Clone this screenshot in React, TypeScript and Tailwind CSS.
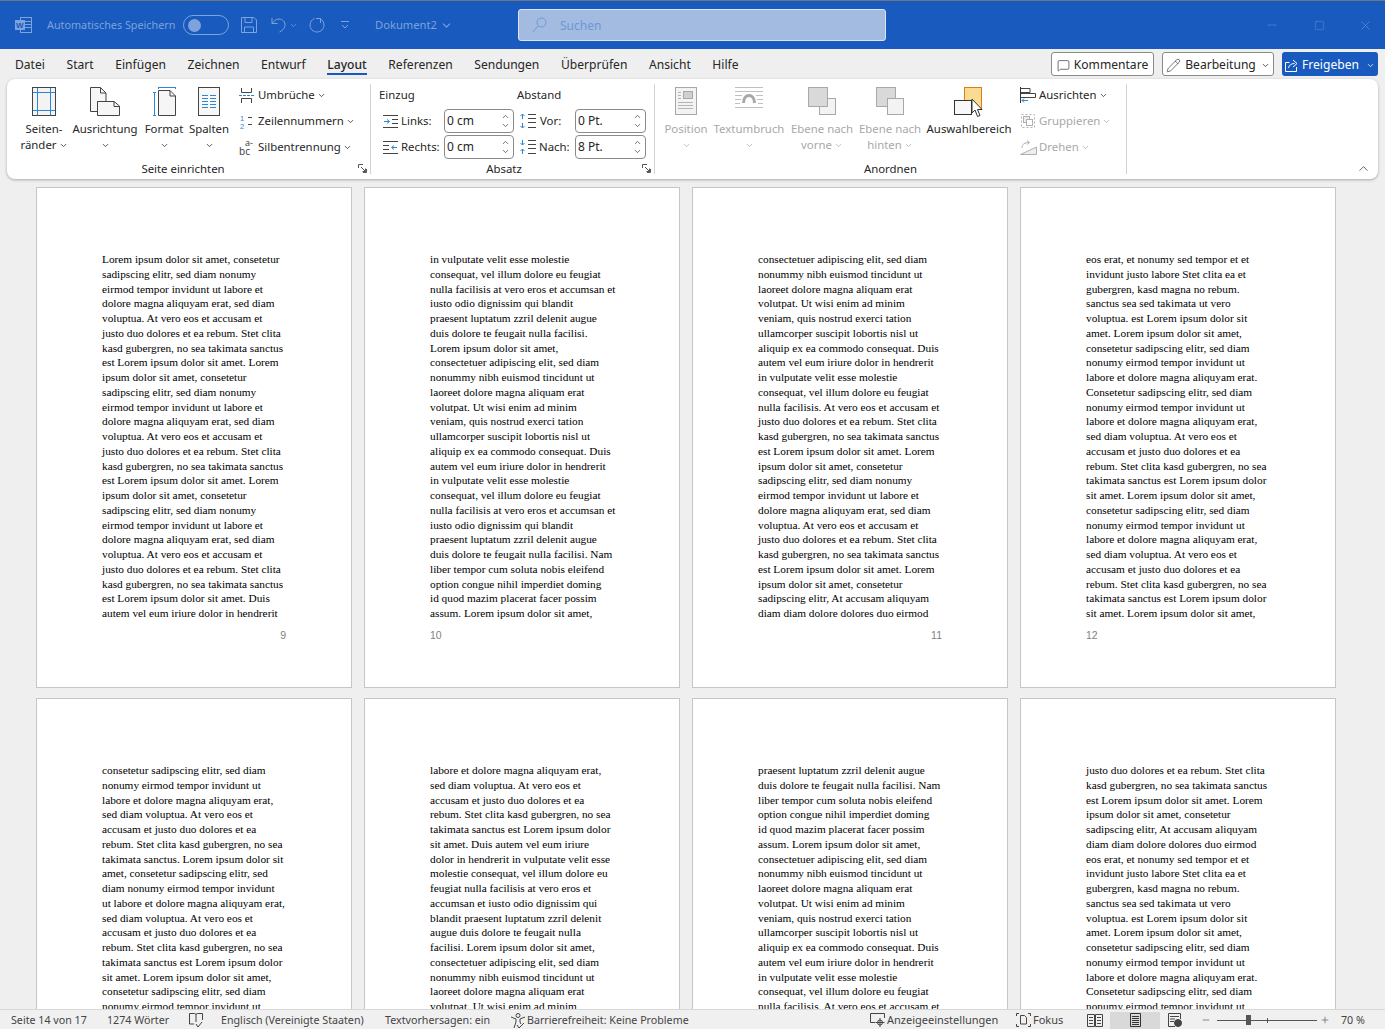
import React from 'react';
import { ChevronDown, ChevronUp, MessageSquare, Minus, Pencil, Plus, Square, X } from 'lucide-react';

const pages = [
  { n: 9, lines: ['Lorem ipsum dolor sit amet, consetetur', 'sadipscing elitr, sed diam nonumy', 'eirmod tempor invidunt ut labore et', 'dolore magna aliquyam erat, sed diam', 'voluptua. At vero eos et accusam et', 'justo duo dolores et ea rebum. Stet clita', 'kasd gubergren, no sea takimata sanctus', 'est Lorem ipsum dolor sit amet. Lorem', 'ipsum dolor sit amet, consetetur', 'sadipscing elitr, sed diam nonumy', 'eirmod tempor invidunt ut labore et', 'dolore magna aliquyam erat, sed diam', 'voluptua. At vero eos et accusam et', 'justo duo dolores et ea rebum. Stet clita', 'kasd gubergren, no sea takimata sanctus', 'est Lorem ipsum dolor sit amet. Lorem', 'ipsum dolor sit amet, consetetur', 'sadipscing elitr, sed diam nonumy', 'eirmod tempor invidunt ut labore et', 'dolore magna aliquyam erat, sed diam', 'voluptua. At vero eos et accusam et', 'justo duo dolores et ea rebum. Stet clita', 'kasd gubergren, no sea takimata sanctus', 'est Lorem ipsum dolor sit amet. Duis', 'autem vel eum iriure dolor in hendrerit'] },
  { n: 10, lines: ['in vulputate velit esse molestie', 'consequat, vel illum dolore eu feugiat', 'nulla facilisis at vero eros et accumsan et', 'iusto odio dignissim qui blandit', 'praesent luptatum zzril delenit augue', 'duis dolore te feugait nulla facilisi.', 'Lorem ipsum dolor sit amet,', 'consectetuer adipiscing elit, sed diam', 'nonummy nibh euismod tincidunt ut', 'laoreet dolore magna aliquam erat', 'volutpat. Ut wisi enim ad minim', 'veniam, quis nostrud exerci tation', 'ullamcorper suscipit lobortis nisl ut', 'aliquip ex ea commodo consequat. Duis', 'autem vel eum iriure dolor in hendrerit', 'in vulputate velit esse molestie', 'consequat, vel illum dolore eu feugiat', 'nulla facilisis at vero eros et accumsan et', 'iusto odio dignissim qui blandit', 'praesent luptatum zzril delenit augue', 'duis dolore te feugait nulla facilisi. Nam', 'liber tempor cum soluta nobis eleifend', 'option congue nihil imperdiet doming', 'id quod mazim placerat facer possim', 'assum. Lorem ipsum dolor sit amet,'] },
  { n: 11, lines: ['consectetuer adipiscing elit, sed diam', 'nonummy nibh euismod tincidunt ut', 'laoreet dolore magna aliquam erat', 'volutpat. Ut wisi enim ad minim', 'veniam, quis nostrud exerci tation', 'ullamcorper suscipit lobortis nisl ut', 'aliquip ex ea commodo consequat. Duis', 'autem vel eum iriure dolor in hendrerit', 'in vulputate velit esse molestie', 'consequat, vel illum dolore eu feugiat', 'nulla facilisis. At vero eos et accusam et', 'justo duo dolores et ea rebum. Stet clita', 'kasd gubergren, no sea takimata sanctus', 'est Lorem ipsum dolor sit amet. Lorem', 'ipsum dolor sit amet, consetetur', 'sadipscing elitr, sed diam nonumy', 'eirmod tempor invidunt ut labore et', 'dolore magna aliquyam erat, sed diam', 'voluptua. At vero eos et accusam et', 'justo duo dolores et ea rebum. Stet clita', 'kasd gubergren, no sea takimata sanctus', 'est Lorem ipsum dolor sit amet. Lorem', 'ipsum dolor sit amet, consetetur', 'sadipscing elitr, At accusam aliquyam', 'diam diam dolore dolores duo eirmod'] },
  { n: 12, lines: ['eos erat, et nonumy sed tempor et et', 'invidunt justo labore Stet clita ea et', 'gubergren, kasd magna no rebum.', 'sanctus sea sed takimata ut vero', 'voluptua. est Lorem ipsum dolor sit', 'amet. Lorem ipsum dolor sit amet,', 'consetetur sadipscing elitr, sed diam', 'nonumy eirmod tempor invidunt ut', 'labore et dolore magna aliquyam erat.', 'Consetetur sadipscing elitr, sed diam', 'nonumy eirmod tempor invidunt ut', 'labore et dolore magna aliquyam erat,', 'sed diam voluptua. At vero eos et', 'accusam et justo duo dolores et ea', 'rebum. Stet clita kasd gubergren, no sea', 'takimata sanctus est Lorem ipsum dolor', 'sit amet. Lorem ipsum dolor sit amet,', 'consetetur sadipscing elitr, sed diam', 'nonumy eirmod tempor invidunt ut', 'labore et dolore magna aliquyam erat,', 'sed diam voluptua. At vero eos et', 'accusam et justo duo dolores et ea', 'rebum. Stet clita kasd gubergren, no sea', 'takimata sanctus est Lorem ipsum dolor', 'sit amet. Lorem ipsum dolor sit amet,'] },
  { n: 13, lines: ['consetetur sadipscing elitr, sed diam', 'nonumy eirmod tempor invidunt ut', 'labore et dolore magna aliquyam erat,', 'sed diam voluptua. At vero eos et', 'accusam et justo duo dolores et ea', 'rebum. Stet clita kasd gubergren, no sea', 'takimata sanctus. Lorem ipsum dolor sit', 'amet, consetetur sadipscing elitr, sed', 'diam nonumy eirmod tempor invidunt', 'ut labore et dolore magna aliquyam erat,', 'sed diam voluptua. At vero eos et', 'accusam et justo duo dolores et ea', 'rebum. Stet clita kasd gubergren, no sea', 'takimata sanctus est Lorem ipsum dolor', 'sit amet. Lorem ipsum dolor sit amet,', 'consetetur sadipscing elitr, sed diam', 'nonumy eirmod tempor invidunt ut'] },
  { n: 14, lines: ['labore et dolore magna aliquyam erat,', 'sed diam voluptua. At vero eos et', 'accusam et justo duo dolores et ea', 'rebum. Stet clita kasd gubergren, no sea', 'takimata sanctus est Lorem ipsum dolor', 'sit amet. Duis autem vel eum iriure', 'dolor in hendrerit in vulputate velit esse', 'molestie consequat, vel illum dolore eu', 'feugiat nulla facilisis at vero eros et', 'accumsan et iusto odio dignissim qui', 'blandit praesent luptatum zzril delenit', 'augue duis dolore te feugait nulla', 'facilisi. Lorem ipsum dolor sit amet,', 'consectetuer adipiscing elit, sed diam', 'nonummy nibh euismod tincidunt ut', 'laoreet dolore magna aliquam erat', 'volutpat. Ut wisi enim ad minim'] },
  { n: 15, lines: ['praesent luptatum zzril delenit augue', 'duis dolore te feugait nulla facilisi. Nam', 'liber tempor cum soluta nobis eleifend', 'option congue nihil imperdiet doming', 'id quod mazim placerat facer possim', 'assum. Lorem ipsum dolor sit amet,', 'consectetuer adipiscing elit, sed diam', 'nonummy nibh euismod tincidunt ut', 'laoreet dolore magna aliquam erat', 'volutpat. Ut wisi enim ad minim', 'veniam, quis nostrud exerci tation', 'ullamcorper suscipit lobortis nisl ut', 'aliquip ex ea commodo consequat. Duis', 'autem vel eum iriure dolor in hendrerit', 'in vulputate velit esse molestie', 'consequat, vel illum dolore eu feugiat', 'nulla facilisis. At vero eos et accusam et'] },
  { n: 16, lines: ['justo duo dolores et ea rebum. Stet clita', 'kasd gubergren, no sea takimata sanctus', 'est Lorem ipsum dolor sit amet. Lorem', 'ipsum dolor sit amet, consetetur', 'sadipscing elitr, At accusam aliquyam', 'diam diam dolore dolores duo eirmod', 'eos erat, et nonumy sed tempor et et', 'invidunt justo labore Stet clita ea et', 'gubergren, kasd magna no rebum.', 'sanctus sea sed takimata ut vero', 'voluptua. est Lorem ipsum dolor sit', 'amet. Lorem ipsum dolor sit amet,', 'consetetur sadipscing elitr, sed diam', 'nonumy eirmod tempor invidunt ut', 'labore et dolore magna aliquyam erat.', 'Consetetur sadipscing elitr, sed diam', 'nonumy eirmod tempor invidunt ut'] },
];

const Chev = ({ className = '' }: { className?: string }) => (
  <ChevronDown size={9} strokeWidth={2} className={`inline-block shrink-0 ${className}`} />
);

const BigButton = ({ w, icon, lines, disabled }: { w: string; icon: React.ReactNode; lines: string[]; disabled?: boolean }) => (
  <div className={`flex flex-col items-center ${w} ${disabled ? 'text-[#a8a8a8]' : 'text-[#262626]'}`}>
    <div className="h-[38px] pt-[4px] flex justify-center">{icon}</div>
    <div className="leading-[16px] whitespace-nowrap">{lines[0]}</div>
    <div className="leading-[16px] h-[16px] whitespace-nowrap flex items-center gap-[2px]">
      {lines[1]}
      <Chev />
    </div>
  </div>
);

const SmallButton = ({ icon, label, disabled }: { icon: React.ReactNode; label: string; disabled?: boolean }) => (
  <div className={`h-[26px] flex items-center whitespace-nowrap ${disabled ? 'text-[#a8a8a8]' : 'text-[#262626]'}`}>
    <div className="w-[19px] shrink-0 flex">{icon}</div>
    <span>{label}</span>
    <Chev className="ml-[2px]" />
  </div>
);

const Launcher = () => (
  <svg width="9" height="9" viewBox="0 0 9 9" fill="none" stroke="#555" className="shrink-0">
    <path d="M8.5 5V8.5H5M.5 4V.5H5M3 3L7.5 7.5M4.5 7.5H7.5V4.5" />
  </svg>
);

const GroupLabel = ({ label, launcher, className = '' }: { label: string; launcher?: boolean; className?: string }) => (
  <div className={`h-[16px] flex items-center justify-center relative text-[#262626] leading-[16px] ${className}`}>
    {label}
    {launcher && (
      <div className="absolute right-[3px] top-[3px]">
        <Launcher />
      </div>
    )}
  </div>
);

const Sep = () => <div className="w-px h-[90px] mt-[1px] bg-[#d2d2d2] shrink-0" />;

const Spin = ({ value, w }: { value: string; w: string }) => (
  <div className={`h-[24px] ${w} border border-[#8a8a8a] rounded-[4px] bg-white flex items-center justify-between pl-[2px] pr-[3px] text-[#262626] text-[12px]`}>
    <span>{value}</span>
    <div className="flex flex-col text-[#444]">
      <ChevronUp size={9} strokeWidth={2} />
      <ChevronDown size={9} strokeWidth={2} />
    </div>
  </div>
);

const Lines = ({ ys, x1, x2, color = '#444' }: { ys: number[]; x1: number; x2: number; color?: string }) => (
  <>
    {ys.map(y => (
      <path key={y} d={`M${x1} ${y}.5H${x2}`} stroke={color} />
    ))}
  </>
);

const IconMargins = () => (
  <svg width="24" height="29" viewBox="0 0 24 29" fill="none">
    <rect x=".5" y=".5" width="23" height="28" fill="#f3f3f3" stroke="#444" />
    <path d="M5.5 1V28M18.5 1V28M1 5.5H23M1 23.5H23" stroke="#2b87d3" />
  </svg>
);
const IconOrientation = () => (
  <svg width="30" height="29" viewBox="0 0 30 29" fill="none" stroke="#444">
    <path d="M.5 24.5V.5H10.5L16 6V14.500H7.500V24.500Z" fill="#f6f6f6" />
    <path d="M10.5 .5V6H16" />
    <path d="M7.5 28.5V14.5H24L29.5 19V28.5Z" fill="#f6f6f6" />
    <path d="M24 14.5V19.5H29.5" />
  </svg>
);
const IconFormat = () => (
  <svg width="23" height="29" viewBox="0 0 23 29" fill="none">
    <path d="M5.5 3.5V28.5H22.5V9L17 3.5Z" fill="#f6f6f6" stroke="#444" />
    <path d="M17 3.5V9H22.5" stroke="#444" />
    <path d="M5.5 .5H22.5M5.5 0V2M22.5 0V2M1.5 6V28M0 5.5H3M0 28.5H3" stroke="#2b87d3" />
  </svg>
);
const IconColumns = () => (
  <svg width="22" height="29" viewBox="0 0 22 29" fill="none">
    <rect x=".5" y=".5" width="21" height="28" fill="#f8f8f8" stroke="#444" />
    <Lines ys={[8, 11, 14, 17, 20]} x1={4} x2={10} color="#2b87d3" />
    <Lines ys={[8, 11, 14, 17, 20]} x1={12} x2={18} color="#2b87d3" />
  </svg>
);
const IconBreaks = () => (
  <svg width="15" height="15" viewBox="0 0 15 15" fill="none">
    <path d="M2.5 0V4.5H12.5V0M2.5 15V10.5H12.5V15" stroke="#444" />
    <path d="M0 7.5H15" stroke="#2b87d3" strokeDasharray="3 1" />
  </svg>
);
const IconLineNo = () => (
  <svg width="15" height="15" viewBox="0 0 15 15" fill="none">
    <text x="1" y="6.5" fontSize="7.5" fill="#2b87d3" fontFamily="Liberation Sans">1</text>
    <text x="1" y="14.5" fontSize="7.5" fill="#2b87d3" fontFamily="Liberation Sans">2</text>
    <path d="M9 3.5H13M9 10.5H13" stroke="#444" />
  </svg>
);
const IconHyphen = () => (
  <svg width="16" height="16" viewBox="0 0 16 16" fill="none">
    <text x="6" y="6.5" fontSize="9" fill="#444" fontFamily="Noto Sans">a-</text>
    <text x="0" y="15.5" fontSize="10" fill="#444" fontFamily="Noto Sans">bc</text>
  </svg>
);
const IconIndentL = () => (
  <svg width="15" height="13" viewBox="0 0 15 13" fill="none">
    <path d="M0 .5H15M9 4.5H15M9 8.5H15M0 12.5H15" stroke="#444" />
    <path d="M1 6.5H6M4 4.5L6.5 6.5L4 8.5" stroke="#2b87d3" />
  </svg>
);
const IconIndentR = () => (
  <svg width="15" height="13" viewBox="0 0 15 13" fill="none">
    <path d="M0 .5H15M0 4.5H6M0 8.5H6M0 12.5H15" stroke="#444" />
    <path d="M14 6.5H9M11 4.5L8.5 6.5L11 8.5" stroke="#2b87d3" />
  </svg>
);
const IconSpaceBefore = () => (
  <svg width="18" height="16" viewBox="0 0 18 16" fill="none">
    <path d="M3.5 1V6M1.5 3L3.5 1L5.5 3M3.5 10V15M1.5 13L3.5 15L5.5 13" stroke="#2b87d3" />
    <path d="M9 1.5H17M9 5.5H17M9 9.5H17M9 14.5H17" stroke="#444" />
  </svg>
);
const IconSpaceAfter = () => (
  <svg width="18" height="16" viewBox="0 0 18 16" fill="none">
    <path d="M3.5 1V6M1.5 4L3.5 6L5.5 4M3.5 10V15M1.5 12L3.5 10L5.5 12" stroke="#2b87d3" />
    <path d="M9 1.5H17M9 5.5H17M9 9.5H17M9 14.5H17" stroke="#444" />
  </svg>
);
const IconPosition = () => (
  <svg width="22" height="28" viewBox="0 0 22 28" fill="none">
    <rect x=".5" y=".5" width="21" height="27" fill="#f3f3f3" stroke="#a8a8a8" />
    <rect x="8.5" y="4.5" width="9" height="7" fill="#d0d0d0" stroke="#a8a8a8" />
    <path d="M3 5.5H6M3 8.5H6M3 11.5H6M3 15.5H18M3 18.5H18M3 21.5H18" stroke="#b5b5b5" />
  </svg>
);
const IconWrap = () => (
  <svg width="28" height="24" viewBox="0 0 28 24" fill="none">
    <path d="M0 .5H28M0 4.5H28M0 8.5H7M21 8.5H28M0 12.5H6M22 12.5H28M0 16.5H5M23 16.5H28M0 20.5H28" stroke="#c0c0c0" />
    <path d="M8.5 16C8.5 11 11 8.5 14 8.5S19.5 11 19.5 16" stroke="#a8a8a8" strokeWidth="3" />
  </svg>
);
const IconForward = () => (
  <svg width="28" height="28" viewBox="0 0 28 28" fill="none">
    <rect x="11.5" y="11.5" width="16" height="16" fill="#f3f3f3" stroke="#a8a8a8" />
    <rect x=".5" y=".5" width="19" height="19" fill="#d9d9d9" stroke="#a8a8a8" />
  </svg>
);
const IconBackward = () => (
  <svg width="28" height="28" viewBox="0 0 28 28" fill="none">
    <rect x=".5" y=".5" width="19" height="19" fill="#d9d9d9" stroke="#a8a8a8" />
    <rect x="11.5" y="11.5" width="16" height="16" fill="#f3f3f3" stroke="#a8a8a8" />
  </svg>
);
const IconSelection = () => (
  <svg width="30" height="31" viewBox="0 0 30 31" fill="none">
    <rect x="10.5" y=".5" width="17" height="22" fill="#fadb92" stroke="#e07b1a" />
    <rect x=".5" y="13.5" width="17" height="14" fill="#f8f8f8" stroke="#333" />
    <path d="M18 12V26L21 23L23.5 29.5L26 28.5L23.5 22.5H28Z" fill="#fff" stroke="#333" />
  </svg>
);
const IconAlign = () => (
  <svg width="16" height="16" viewBox="0 0 16 16" fill="none">
    <path d="M.5 0V16" stroke="#333" />
    <path d="M1 1.5H10V5.5H1M1 6.5H15.5V10.5H1" fill="#fff" stroke="#444" />
    <path d="M2 13.5H8M4 11.5L2 13.5L4 15.5" stroke="#2b87d3" />
  </svg>
);
const IconGroup = () => (
  <svg width="16" height="16" viewBox="0 0 16 16" fill="none" stroke="#b0b0b0">
    <rect x="1.5" y="1.5" width="13" height="13" strokeDasharray="2 2" />
    <rect x="3.5" y="3.5" width="6" height="6" fill="#eee" />
    <rect x="6.5" y="6.5" width="6" height="6" fill="#fff" />
  </svg>
);
const IconRotate = () => (
  <svg width="17" height="15" viewBox="0 0 17 15" fill="none" stroke="#b0b0b0">
    <path d="M.5 14.5L16.5 7V14.5Z" fill="#eee" />
    <path d="M2 8C2 4 5 2.5 9 2.5M7 .5L9.5 2.5L7 4.5" />
  </svg>
);

const Page = ({ n, lines }: { n: number; lines: string[] }) => (
  <div className="h-[501px] bg-white border border-[#c6c6c6] pt-[64px] pl-[65px] pr-[65px] font-['Liberation_Serif',serif] text-[11.3px] leading-[14.75px] text-black overflow-hidden">
    {lines.map((l, i) => (
      <div key={i} className="whitespace-nowrap">
        {l}
      </div>
    ))}
    <div className={`mt-[7px] font-['Liberation_Sans',sans-serif] text-[10.5px] text-[#7f7f7f] ${n % 2 ? 'text-right' : 'text-left'}`}>{n}</div>
  </div>
);

export default function App() {
  const tabs = ['Datei', 'Start', 'Einfügen', 'Zeichnen', 'Entwurf', 'Layout', 'Referenzen', 'Sendungen', 'Überprüfen', 'Ansicht', 'Hilfe'];
  const dim = 'text-[#7ea2dc]';

  return (
    <div className="h-screen w-full overflow-hidden flex flex-col bg-[#efefef] font-['Noto_Sans',sans-serif] text-[11.4px]">
      {/* title bar */}
      <div className={`h-[49px] shrink-0 bg-[#185abd] border-t border-[#6f7680] flex items-center ${dim}`}>
        <div className="ml-[15px] w-[32px] shrink-0">
          <svg width="17" height="16" viewBox="0 0 17 16" fill="none">
            <rect x="5.5" y=".5" width="11" height="15" stroke="#7ea2dc" />
            <path d="M10 4.5H16M10 7.5H16M10 10.5H16" stroke="#7ea2dc" />
            <rect x="0" y="3" width="10" height="10" fill="#7ea2dc" />
            <text x="1" y="11" fontSize="8" fontWeight="700" fill="#185abd" fontFamily="Liberation Sans">W</text>
          </svg>
        </div>
        <span className="text-[10.8px] w-[136px] whitespace-nowrap">Automatisches Speichern</span>
        <div className="w-[46px] h-[20px] rounded-full border border-[#7ea2dc] flex items-center pl-[4px]">
          <div className="w-[13px] h-[13px] rounded-full bg-[#7ea2dc]" />
        </div>
        <svg className="ml-[12px]" width="16" height="16" viewBox="0 0 16 16" fill="none" stroke="#7ea2dc">
          <path d="M.5.5H13L15.5 3V15.5H.5Z" />
          <path d="M4 .5V5.5H11V.5M3.5 15.5V10H12.5V15.5" />
        </svg>
        <svg className="ml-[14px]" width="15" height="16" viewBox="0 0 15 16" fill="none" stroke="#7ea2dc">
          <path d="M1 1V6.5H6.5M1 6.5C3 3.5 5.5 2 8 2C11.5 2 14.5 5 14 8.5C13.6 11.5 11.5 13.5 8.5 15" />
        </svg>
        <Chev className="ml-[3px]" />
        <svg className="ml-[11px]" width="16" height="16" viewBox="0 0 16 16" fill="none" stroke="#7ea2dc">
          <path d="M11 1.5C13.5 3 15 5.3 15 8C15 11.9 11.9 15 8 15C4.1 15 1 11.9 1 8C1 5 3 2.500 5.5 1.5M7 1.5H11.5V6" />
        </svg>
        <svg className="ml-[16px]" width="8" height="8" viewBox="0 0 8 8" fill="none" stroke="#7ea2dc">
          <path d="M0 .5H8M1 4L4 7L7 4" />
        </svg>
        <span className="ml-[26px] text-[11.2px] pt-[1px] whitespace-nowrap">Dokument2</span>
        <ChevronDown size={13} className="ml-[3px]" />
        <div className="ml-[65px] w-[368px] h-[32px] rounded-[3px] bg-[#a3bbe0] border border-[#dbe4f3] flex items-center pl-[13px] text-[#6f96d6]">
          <svg width="15" height="16" viewBox="0 0 15 16" fill="none" stroke="#6f96d6">
            <circle cx="9.5" cy="5.5" r="4.5" />
            <path d="M6 9L1 15" />
          </svg>
          <span className="ml-[13px] pt-[1px] text-[12px]">Suchen</span>
        </div>
        <div className="ml-auto flex items-center text-[#6f96d6]">
          <Minus size={14} strokeWidth={1} />
          <Square size={11} strokeWidth={1} className="ml-[35px]" />
          <X size={15} strokeWidth={1} className="ml-[33px] mr-[12px]" />
        </div>
      </div>

      {/* tabs */}
      <div className="h-[30px] shrink-0 flex items-center pl-[15px] text-[#262626] text-[12.1px]">
        <div className="flex gap-[21.6px]">
          {tabs.map(t => (
            <div key={t} className={`relative h-[30px] pt-[2px] flex items-center whitespace-nowrap ${t === 'Layout' ? 'font-medium' : ''}`}>
              {t}
              {t === 'Layout' && <div className="absolute left-0 right-0 bottom-[4px] h-[2px] bg-[#185abd]" />}
            </div>
          ))}
        </div>
        <div className="ml-auto mr-[7px] flex items-center gap-[8px] whitespace-nowrap">
          <div className="h-[24px] w-[103px] pt-[2px] border border-[#8a8a8a] rounded-[3px] bg-white flex items-center justify-center gap-[4px]">
            <MessageSquare size={13} strokeWidth={1.2} />
            Kommentare
          </div>
          <div className="h-[24px] w-[112px] pt-[2px] border border-[#8a8a8a] rounded-[3px] bg-white flex items-center justify-center gap-[4px]">
            <Pencil size={15} strokeWidth={1} />
            Bearbeitung
            <Chev className="ml-[1px]" />
          </div>
          <div className="h-[24px] w-[96px] pt-[2px] rounded-[3px] bg-[#185abd] text-white flex items-center justify-center gap-[4px]">
            <svg width="13" height="13" viewBox="0 0 13 13" fill="none" stroke="#fff">
              <path d="M4.5 3.5H.5V12.5H11.5V8" />
              <path d="M3.5 9C4 6 6.5 4.5 9.5 4.5M8 1L12 4.5L8 8" />
            </svg>
            Freigeben
            <Chev className="ml-[3px]" />
          </div>
        </div>
      </div>

      {/* ribbon */}
      <div className="mx-[7px] h-[100px] shrink-0 bg-white rounded-[8px] shadow-[0_1px_3px_rgba(0,0,0,0.3)] flex pt-[4px] relative z-10">
        {/* Seite einrichten */}
        <div className="w-[363px] shrink-0 flex flex-col">
          <div className="h-[78px] flex pl-[10px]">
            <BigButton w="w-[54px]" icon={<IconMargins />} lines={['Seiten-', 'ränder']} />
            <BigButton w="w-[68px]" icon={<IconOrientation />} lines={['Ausrichtung', '']} />
            <BigButton w="w-[50px]" icon={<IconFormat />} lines={['Format', '']} />
            <BigButton w="w-[40px]" icon={<IconColumns />} lines={['Spalten', '']} />
            <div className="ml-[10px] -mt-[1px]">
              <SmallButton icon={<IconBreaks />} label="Umbrüche" />
              <SmallButton icon={<IconLineNo />} label="Zeilennummern" />
              <SmallButton icon={<IconHyphen />} label="Silbentrennung" />
            </div>
          </div>
          <GroupLabel label="Seite einrichten" launcher className="pr-[11px]" />
        </div>
        <Sep />

        {/* Absatz */}
        <div className="w-[283px] shrink-0 flex flex-col">
          <div className="h-[78px] flex pl-[8px]">
            <div className="w-[138px] -mt-[1px] text-[#262626]">
              <div className="h-[26px] flex items-center">Einzug</div>
              <div className="h-[26px] flex items-center pl-[4px]">
                <IconIndentL />
                <span className="ml-[3px] w-[43px]">Links:</span>
                <Spin value="0 cm" w="w-[70px]" />
              </div>
              <div className="h-[26px] flex items-center pl-[4px]">
                <IconIndentR />
                <span className="ml-[3px] w-[43px]">Rechts:</span>
                <Spin value="0 cm" w="w-[70px]" />
              </div>
            </div>
            <div className="w-[130px] -mt-[1px] text-[#262626]">
              <div className="h-[26px] flex items-center">Abstand</div>
              <div className="h-[26px] flex items-center pl-[2px]">
                <IconSpaceBefore />
                <span className="ml-[3px] w-[35px]">Vor:</span>
                <Spin value="0 Pt." w="w-[71px]" />
              </div>
              <div className="h-[26px] flex items-center pl-[2px]">
                <IconSpaceAfter />
                <span className="ml-[2px] w-[36px]">Nach:</span>
                <Spin value="8 Pt." w="w-[71px]" />
              </div>
            </div>
          </div>
          <GroupLabel label="Absatz" launcher className="pr-[17px]" />
        </div>
        <Sep />

        {/* Anordnen */}
        <div className="w-[471px] shrink-0 flex flex-col">
          <div className="h-[78px] flex pl-[6px]">
            <BigButton w="w-[50px]" icon={<IconPosition />} lines={['Position', '']} disabled />
            <BigButton w="w-[76px]" icon={<IconWrap />} lines={['Textumbruch', '']} disabled />
            <BigButton w="w-[70px]" icon={<IconForward />} lines={['Ebene nach', 'vorne']} disabled />
            <BigButton w="w-[66px]" icon={<IconBackward />} lines={['Ebene nach', 'hinten']} disabled />
            <div className="w-[92px] flex flex-col items-center text-[#262626]">
              <div className="h-[38px] pt-[4px]">
                <IconSelection />
              </div>
              <div className="leading-[16px] whitespace-nowrap">Auswahlbereich</div>
            </div>
            <div className="ml-[5px] -mt-[1px]">
              <SmallButton icon={<IconAlign />} label="Ausrichten" />
              <SmallButton icon={<IconGroup />} label="Gruppieren" disabled />
              <SmallButton icon={<IconRotate />} label="Drehen" disabled />
            </div>
          </div>
          <GroupLabel label="Anordnen" />
        </div>
        <Sep />

        <div className="flex-1 flex items-end justify-end pb-[3px] pr-[7px]">
          <ChevronUp size={15} strokeWidth={1.3} className="text-[#444]" />
        </div>
      </div>

      {/* pages */}
      <div className="flex-1 min-h-0 overflow-hidden pt-[8px] pl-[36px]">
        <div className="grid grid-cols-[repeat(4,316px)] gap-x-[12px] gap-y-[10px]">
          {pages.map(p => (
            <Page key={p.n} n={p.n} lines={p.lines} />
          ))}
        </div>
      </div>

      {/* status bar */}
      <div className="h-[20px] shrink-0 pt-[2px] bg-[#f0f0f0] border-t border-[#d8d8d8] flex items-center text-[10.7px] text-[#444] whitespace-nowrap">
        <span className="ml-[11px] w-[96px]">Seite 14 von 17</span>
        <span className="w-[82px]">1274 Wörter</span>
        <svg width="14" height="15" viewBox="0 0 14 15" fill="none" stroke="#444">
          <path d="M.5 .5H5.5C6.5 .5 7 1 7 2V9M13.5 .5H8.5C7.500 .5 7 1 7 2M.5 .5V11H5M13.5 .5V7M7 11L9 14L13 9" />
        </svg>
        <span className="ml-[18px] w-[164px]">Englisch (Vereinigte Staaten)</span>
        <span className="w-[125px]">Textvorhersagen: ein</span>
        <svg width="16" height="16" viewBox="0 0 16 16" fill="none" stroke="#444">
          <circle cx="8" cy="2.500" r="2" />
          <path d="M1 4L6 6V9L4 15M15 4L10 6V9L11 11M7 12L9 15L14 10" />
        </svg>
        <span className="ml-[1px]">Barrierefreiheit: Keine Probleme</span>

        <div className="ml-auto flex items-center h-full -mt-[1px]">
          <svg width="15" height="14" viewBox="0 0 15 14" fill="none" stroke="#444">
            <path d="M5 9.5H.5V.5H14.500V5" />
            <circle cx="10" cy="9.500" r="2.500" />
            <path d="M10 5V14M5.500 9.500H14.500" />
          </svg>
          <span className="ml-[2px] w-[129px] pt-[1px] text-[11px]">Anzeigeeinstellungen</span>
          <svg width="15" height="14" viewBox="0 0 15 14" fill="none" stroke="#444">
            <path d="M.5 3V.5H3M12 .5H14.500V3M.5 11V13.500H3M12 13.500H14.500V11" />
            <path d="M4.500 11V2.500H8.500L10.500 4.500V11Z" />
          </svg>
          <span className="ml-[2px] w-[54px] pt-[1px] text-[11px]">Fokus</span>
          <svg width="16" height="13" viewBox="0 0 16 13" fill="none" stroke="#444">
            <path d="M.5 .5H7.500V12.500H.5ZM8.500 .5H15.500V12.500H8.500ZM2 3.500H6M2 6.500H6M2 9.500H6M10 3.500H14M10 6.500H14M10 9.500H14" />
          </svg>
          <div className="ml-[7px] w-[50px] h-full bg-[#d9d9d9] flex items-center justify-center">
            <svg width="11" height="14" viewBox="0 0 11 14" fill="none" stroke="#333">
              <path d="M.5 .5H10.500V13.500H.5ZM2 3.500H9M2 5.500H9M2 7.500H9M2 9.500H9M2 11.500H9" />
            </svg>
          </div>
          <svg className="ml-[8px]" width="14" height="14" viewBox="0 0 14 14" fill="none" stroke="#444">
            <path d="M7 13.500H.5V.5H12.500V6M2 3.500H11M2 6H7M2 8.500H6" />
            <circle cx="10" cy="10" r="3.500" fill="#444" />
          </svg>
          <Minus size={10} strokeWidth={1.4} className="ml-[19px]" />
          <div className="ml-[6px] w-[100px] h-[10px] flex items-center relative">
            <div className="w-full h-px bg-[#555]" />
            <div className="absolute left-[50px] top-[3px] h-[5px] w-px bg-[#555]" />
            <div className="absolute left-[29px] top-0 h-[10px] w-[5px] bg-[#555]" />
          </div>
          <Plus size={10} strokeWidth={1.4} className="ml-[3px]" />
          <span className="ml-[11px] w-[44px] pt-[1px]">70 %</span>
        </div>
      </div>
    </div>
  );
}
